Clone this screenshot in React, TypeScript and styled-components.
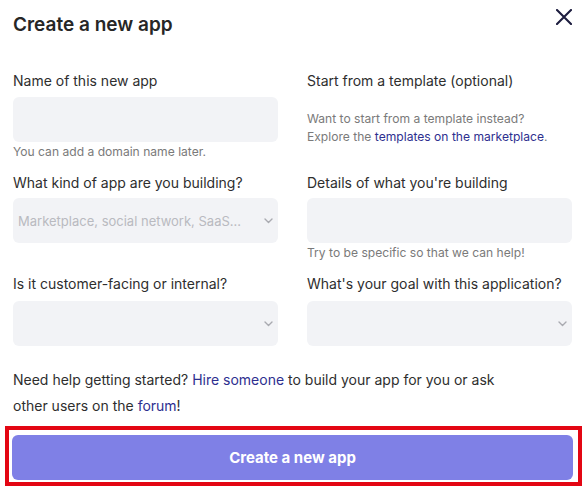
import React from "react";
import styled, { createGlobalStyle } from "styled-components";

const Global = createGlobalStyle`
  html, body { margin: 0; padding: 0; background: #ffffff; }
  body { font-family: Inter, "Noto Sans", sans-serif; color: #2b2b2b; }
  * { box-sizing: border-box; }
`;

const Page = styled.div`
  width: 586px;
  padding: 0 14px 0 13px;
`;

const Header = styled.div`
  display: flex;
  justify-content: space-between;
  align-items: flex-start;
  height: 71px;
  padding-top: 12px;
`;

const Title = styled.h1`
  margin: 0;
  font-size: 19px;
  line-height: 26px;
  font-weight: 600;
  color: #262626;
`;

const Close = styled.button`
  border: 0;
  background: none;
  padding: 0;
  margin: -3px 0 0 0;
  width: 16px;
  height: 16px;
  display: flex;
  cursor: pointer;
`;

const Grid = styled.div`
  display: grid;
  grid-template-columns: 265px 265px;
  column-gap: 29px;
  row-gap: 12px;
`;

const Field = styled.div`
  display: flex;
  flex-direction: column;
`;

const Label = styled.label<{ $gap?: number }>`
  font-size: 14px;
  line-height: 20px;
  color: #2e2e2e;
  margin-bottom: ${(p) => p.$gap ?? 6}px;
`;

const Input = styled.div`
  height: 45px;
  border-radius: 6px;
  background: #f2f3f6;
`;

const Select = styled.div`
  height: 45px;
  border-radius: 6px;
  background: #f2f3f6;
  display: flex;
  align-items: center;
  padding: 0 5px 0 5px;
  gap: 10px;
`;

const Placeholder = styled.span`
  flex: 1;
  min-width: 0;
  font-size: 13px;
  color: #b9bac0;
  white-space: nowrap;
  overflow: hidden;
  text-overflow: ellipsis;
`;

const Hint = styled.div<{ $top?: number }>`
  font-size: 12.1px;
  line-height: 18px;
  color: #7a7a7a;
  margin-top: ${(p) => p.$top ?? 1}px;
`;

const Link = styled.a`
  color: #2e2f8f;
  text-decoration: none;
`;

const Help = styled.p`
  margin: 21px 0 0 0;
  max-width: 515px;
  font-size: 14px;
  line-height: 26px;
  color: #2e2e2e;
`;

const Highlight = styled.div`
  margin: 7px -10px 0 -8px;
  border: 4px solid #e30613;
  padding: 5px 5px 2px 3px;
`;

const Primary = styled.button`
  width: 100%;
  height: 45px;
  border: 0;
  border-radius: 6px;
  background: #7f80e6;
  color: #ffffff;
  font-family: Inter, "Noto Sans", sans-serif;
  font-size: 15px;
  font-weight: 700;
  cursor: pointer;
`;

const Chevron = () => (
  <svg width="9" height="6" viewBox="0 0 9 6" fill="none">
    <path d="M1 1l3.5 3.5L8 1" stroke="#a9aab0" strokeWidth="1.4" strokeLinecap="round" strokeLinejoin="round" />
  </svg>
);

export default function App() {
  return (
    <Page>
      <Global />
      <Header>
        <Title>Create a new app</Title>
        <Close aria-label="Close">
          <svg width="16" height="16" viewBox="0 0 16 16" fill="none">
            <path d="M1 1l14 14M15 1L1 15" stroke="#1d1d3f" strokeWidth="2.1" strokeLinecap="round" />
          </svg>
        </Close>
      </Header>
      <Grid>
        <Field>
          <Label>Name of this new app</Label>
          <Input />
          <Hint>You can add a domain name later.</Hint>
        </Field>
        <Field>
          <Label>Start from a template (optional)</Label>
          <Hint $top={13}>
            Want to start from a template instead?
            <br />
            Explore the <Link>templates on the marketplace</Link>.
          </Hint>
        </Field>
        <Field>
          <Label $gap={5}>What kind of app are you building?</Label>
          <Select>
            <Placeholder>Marketplace, social network, SaaS...</Placeholder>
            <Chevron />
          </Select>
        </Field>
        <Field>
          <Label $gap={5}>Details of what you're building</Label>
          <Input />
          <Hint>Try to be specific so that we can help!</Hint>
        </Field>
        <Field>
          <Label $gap={7}>Is it customer-facing or internal?</Label>
          <Select>
            <Placeholder />
            <Chevron />
          </Select>
        </Field>
        <Field>
          <Label $gap={7}>What's your goal with this application?</Label>
          <Select>
            <Placeholder />
            <Chevron />
          </Select>
        </Field>
      </Grid>
      <Help>
        Need help getting started? <Link>Hire someone</Link> to build your app for you or ask other users on the{" "}
        <Link>forum</Link>!
      </Help>
      <Highlight>
        <Primary>Create a new app</Primary>
      </Highlight>
    </Page>
  );
}
